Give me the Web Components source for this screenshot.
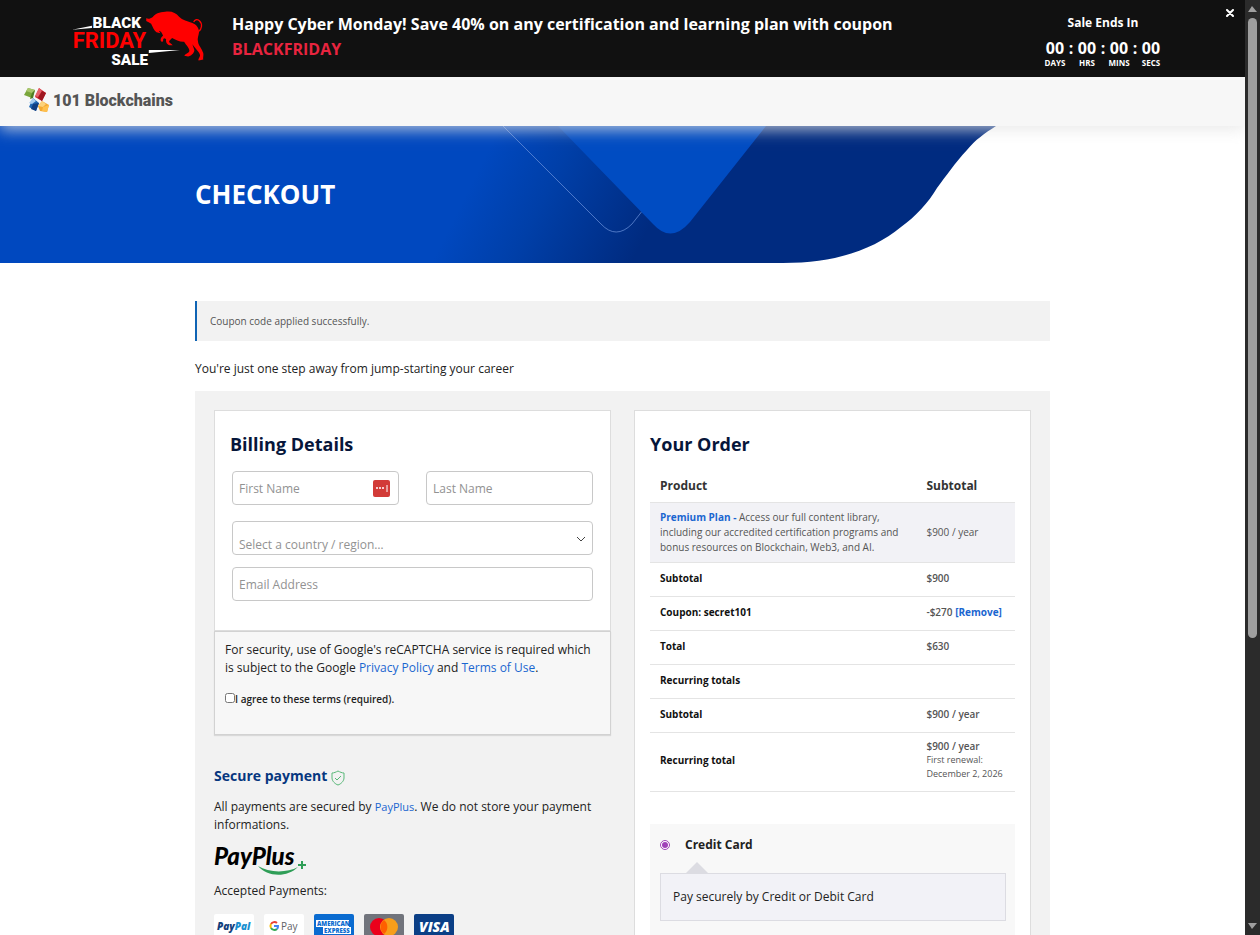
<!DOCTYPE html>
<html lang="en">
<head>
<meta charset="utf-8">
<meta name="viewport" content="width=device-width, initial-scale=1">
<title>Checkout - 101 Blockchains</title>
<style>
    body {
        margin: 0;
        font-family: "Open Sans", "Noto Sans", sans-serif;
        font-size: 12px;
        line-height: 18px;
        color: #222;
        background: #fff;
    }
</style>
</head>
<body>
<checkout-app></checkout-app>

<script>
/** Rules that every component starts from. */
const baseStyles = `
    :host { display: block; box-sizing: border-box; }
    *, *::before, *::after { box-sizing: border-box; }
    h1, h2, h3, p { margin: 0; }
    a { color: #1a66d0; text-decoration: none; }
    svg { display: block; }
`;

/**
 * Base class: attaches a shadow root and renders the markup into it.
 * @extends HTMLElement
 */
class BaseComponent extends HTMLElement {
    constructor() {
        super();
        this.attachShadow({ mode: 'open' });
    }

    connectedCallback() {
        this.shadowRoot.innerHTML = `<style>${baseStyles}${this.styles()}</style>${this.markup()}`;
        this.attachEventListeners();
    }

    styles() { return ''; }
    markup() { return '<slot></slot>'; }
    attachEventListeners() {}
}

/** Countdown to the end of the sale. */
class CountDown extends BaseComponent {
    styles() {
        return `
            :host { padding-top: 4px; text-align: center; font-weight: 700; color: #fff; }
            .title { font-size: 12px; line-height: 18px; margin-bottom: 6px; }
            .units { display: flex; justify-content: center; }
            .unit { width: 24px; font-size: 16px; line-height: 20px; }
            .unit small { display: flex; justify-content: center; font-size: 8px; line-height: 10px; }
            .colon { width: 8px; font-size: 16px; line-height: 20px; }
        `;
    }

    markup() {
        const units = ['DAYS', 'HRS', 'MINS', 'SECS']
            .map(name => `<div class="unit">00<small>${name}</small></div>`)
            .join('<div class="colon">:</div>');
        return `<p class="title">Sale Ends In</p><div class="units">${units}</div>`;
    }
}
customElements.define('count-down', CountDown);

/** Black promo strip on top of the page. */
class PromoBanner extends BaseComponent {
    styles() {
        return `
            :host {
                position: relative;
                z-index: 2;
                display: flex;
                align-items: center;
                gap: 27px;
                height: 77px;
                padding: 0 82px 0 72px;
                background: #111;
                color: #fff;
            }
            .logo { flex: none; }
            .message { flex: 1; padding-bottom: 3px; font-size: 16px; font-weight: 700; line-height: 25px; }
            .code { display: block; color: #e8243f; }
            count-down { flex: none; }
            .close {
                position: absolute;
                top: 6px;
                right: 8px;
                width: 14px;
                height: 14px;
                padding: 3px;
                border: 0;
                background: none;
                color: #fff;
                cursor: pointer;
            }
            text { font-family: Roboto, sans-serif; font-weight: 900; }
        `;
    }

    markup() {
        return `
            <svg class="logo" width="133" height="60" viewBox="20 10 400 180" role="img" aria-label="Black Friday Sale">
                <g fill="#fff">
                    <text x="82" y="67" font-size="46">BLACK</text>
                    <text x="138" y="179" font-size="46">SALE</text>
                </g>
                <text x="22" y="127" font-size="66" fill="#f00" style="font-weight: 700">FRIDAY</text>
                <path fill="#fff" d="M20 72 L80 60 V67ZM251 133 L345 133 L251 142Z"/>
                <path fill="#f00" d="M243 37 C248 41 255 40 263 34 C269 24 283 19 300 18 C319 15 333 21 342 33 C352 43 368 47 382 52 C395 57 402 67 402 80 C401 91 396 98 399 108 C400 119 409 126 413 138 C418 145 413 155 415 162 L401 165 C398 161 405 155 405 149 C404 140 390 129 382 116 L388 133 C388 143 377 151 369 153 L358 150 C360 144 371 143 373 136 C374 128 364 119 357 108 C345 109 331 103 321 97 L313 105 C309 111 319 113 323 119 L313 119 C303 115 302 106 303 100 L297 98 C291 101 298 109 290 108 C283 104 288 93 294 90 C291 83 287 75 281 75 L286 83 L274 80 C267 75 263 64 258 54 L248 48 C240 46 245 42 243 37Z"/>
                <path fill="none" stroke="#f00" stroke-width="4" d="M400 78 C411 71 413 54 403 45 C397 40 389 41 386 49"/>
            </svg>
            <div class="message"><slot></slot><span class="code"><slot name="code"></slot></span></div>
            <count-down></count-down>
            <button class="close" aria-label="Close">
                <svg width="8" height="8" viewBox="0 0 8 8"><path d="M1 1 L7 7 M7 1 L1 7" stroke="currentColor" stroke-width="2" stroke-linecap="round"/></svg>
            </button>
        `;
    }

    attachEventListeners() {
        this.shadowRoot.querySelector('.close').addEventListener('click', () => this.remove());
    }
}
customElements.define('promo-banner', PromoBanner);

/** Site header with the brand logo. */
class SiteHeader extends BaseComponent {
    styles() {
        return `
            :host {
                position: relative;
                z-index: 1;
                display: flex;
                align-items: center;
                height: 49px;
                padding: 0 24px 3px;
                background: #f7f7f7;
                box-shadow: 0 4px 14px rgba(228, 228, 228, 0.75);
            }
            a { display: flex; align-items: center; gap: 4px; color: #555; }
            text { font: 900 16px Roboto, sans-serif; }
        `;
    }

    markup() {
        return `
            <a href="#" aria-label="101 Blockchains">
                <svg width="25" height="26" viewBox="0 0 25 26">
                    <g><path fill="#7aa63c" d="M4 1 L11 3 L8 11 L0 8Z"/><path fill="#a9c66c" d="M4 1 L11 3 L8 6 L2 4Z"/><path fill="#4f7d22" d="M8 6 L11 3 L9 11 L6 12Z"/></g>
                    <g><path fill="#d22630" d="M15 1 L22 6 L18 14 L11 10Z"/><path fill="#e4626a" d="M15 1 L18 4 L14 10 L11 9Z"/><path fill="#9e1720" d="M18 4 L22 6 L18 14 L14 11Z"/></g>
                    <g><path fill="#2068b4" d="M9 11 L15 16 L12 24 L5 20Z"/><path fill="#a8cdf0" d="M9 11 L12 14 L8 17 L5 16Z"/><path fill="#123f82" d="M9 17 L15 16 L12 24 L7 22Z"/></g>
                    <g><path fill="#f3a932" d="M18 14 L25 18 L23 25 L16 24 L14 19Z"/><path fill="#fcd27c" d="M18 14 L22 17 L19 20 L14 19Z"/><path fill="#ffc04d" d="M19 20 L25 18 L23 25 L18 24Z"/></g>
                </svg>
                <svg width="140" height="26" viewBox="0 0 140 26">
                    <text x="0" y="19" fill="currentColor">101 Blockchains</text>
                </svg>
            </a>
        `;
    }
}
customElements.define('site-header', SiteHeader);

/** Blue page title area. The slot takes the title. */
class PageHero extends BaseComponent {
    styles() {
        return `
            :host { display: grid; height: 137px; overflow: hidden; }
            .art, .title { grid-area: 1 / 1; }
            .art { width: 100%; height: 137px; }
            .title {
                align-self: center;
                width: 100%;
                max-width: 855px;
                margin: 0 auto;
                padding-bottom: 2px;
                color: #fff;
                font-size: 26px;
                font-weight: 700;
                line-height: 36px;
            }
        `;
    }

    markup() {
        return `
            <svg class="art" viewBox="0 0 1245 137" preserveAspectRatio="none" aria-hidden="true">
                <defs>
                    <linearGradient id="base" gradientUnits="userSpaceOnUse" x1="480" y1="40" x2="640" y2="120">
                        <stop offset="0" stop-color="#0048bf"/>
                        <stop offset="0.4" stop-color="#003fa8"/>
                        <stop offset="1" stop-color="#002b80"/>
                    </linearGradient>
                </defs>
                <path fill="url(#base)" d="M0 0H996C985 7 975 14 967 24C955 37 946 50 937 62C928 77 916 90 901 101C873 124 835 137 783 137H0Z"/>
                <path fill="none" stroke="#6d94dd" stroke-opacity="0.7" d="M503 0L601 98Q616 114 632 98L643 84"/>
                <path fill="#004cc2" d="M558 0H766L690 96Q671 118 653 98Z"/>
            </svg>
            <h1 class="title"><slot></slot></h1>
        `;
    }
}
customElements.define('page-hero', PageHero);

/** Grey message line with a coloured edge. */
class NoticeBar extends BaseComponent {
    styles() {
        return `
            :host {
                padding: 11px 13px;
                border-left: 2px solid #0f64b4;
                background: #f2f2f2;
                color: #555;
                font-size: 10px;
            }
        `;
    }
}
customElements.define('notice-bar', NoticeBar);

/** White bordered card with a heading attribute. */
class CheckoutCard extends BaseComponent {
    styles() {
        return `
            :host { padding: 15px; border: 1px solid #ddd; background: #fff; }
            h2 { margin-bottom: 7px; color: #06163a; font-size: 18px; font-weight: 700; line-height: 36px; }
        `;
    }

    markup() {
        return `<h2>${this.getAttribute('heading')}</h2><slot></slot>`;
    }
}
customElements.define('checkout-card', CheckoutCard);

/** Single text input; "vault" adds the password manager button. */
class TextField extends BaseComponent {
    styles() {
        return `
            :host { position: relative; }
            input {
                display: block;
                width: 100%;
                height: 34px;
                padding: 0 6px;
                border: 1px solid #c8c8c8;
                border-radius: 4px;
                background: #fff;
                color: #333;
                font: inherit;
            }
            input::placeholder { color: #929292; opacity: 1; }
            .vault {
                position: absolute;
                top: 9px;
                right: 9px;
                padding: 0;
                border: 0;
                background: none;
            }
        `;
    }

    markup() {
        const label = this.getAttribute('label');
        const vault = this.hasAttribute('vault') ? `
            <button class="vault" type="button" aria-label="Fill in">
                <svg width="17" height="17" viewBox="0 0 17 17">
                    <rect width="17" height="17" rx="2" fill="#d23b38"/>
                    <circle cx="4" cy="8" r="1" fill="#fff"/><circle cx="7" cy="8" r="1" fill="#fff"/><circle cx="10" cy="8" r="1" fill="#fff"/>
                    <path d="M14 5V12" stroke="#fff"/>
                </svg>
            </button>` : '';
        return `<input type="${this.getAttribute('type') || 'text'}" placeholder="${label}" aria-label="${label}">${vault}`;
    }
}
customElements.define('text-field', TextField);

/** Country drop-down. */
class CountrySelect extends BaseComponent {
    styles() {
        return `
            :host { position: relative; }
            select {
                display: block;
                width: 100%;
                height: 34px;
                padding: 14px 28px 0 6px;
                border: 1px solid #c8c8c8;
                border-radius: 4px;
                appearance: none;
                background: #fff;
                color: #929292;
                font: inherit;
            }
            svg { position: absolute; top: 14px; right: 7px; pointer-events: none; }
        `;
    }

    markup() {
        return `
            <select aria-label="Country / Region"><option>Select a country / region…</option></select>
            <svg width="10" height="8" viewBox="0 0 10 8"><path d="M1 2L5 6L9 2" fill="none" stroke="#444"/></svg>
        `;
    }
}
customElements.define('country-select', CountrySelect);

/** Name, country and email fields. */
class BillingForm extends BaseComponent {
    styles() {
        return `
            form { display: grid; grid-template-columns: 1fr 1fr; column-gap: 27px; padding: 2px 2px 14px; }
            .wide { grid-column: 1 / -1; }
            country-select { margin: 16px 0 12px; }
        `;
    }

    markup() {
        return `
            <form>
                <text-field label="First Name" vault></text-field>
                <text-field label="Last Name"></text-field>
                <country-select class="wide"></country-select>
                <text-field class="wide" type="email" label="Email Address"></text-field>
            </form>
        `;
    }
}
customElements.define('billing-form', BillingForm);

/** reCAPTCHA terms with the consent tick box. */
class TermsBox extends BaseComponent {
    styles() {
        return `
            :host {
                padding: 9px 10px 26px;
                border: 1px solid #d2d2d2;
                background: #f7f7f7;
                box-shadow: 0 1px 1px rgba(0, 0, 0, 0.1);
            }
            label { display: flex; align-items: center; margin-top: 13px; font-size: 10px; font-weight: 600; line-height: 18px; }
            input { width: 10px; height: 10px; margin: 0 0 3px; }
        `;
    }

    markup() {
        return `
            <p>For security, use of Google's reCAPTCHA service is required which is subject to the Google
            <a href="#">Privacy Policy</a> and <a href="#">Terms of Use</a>.</p>
            <label><input type="checkbox">I agree to these terms (required).</label>
        `;
    }
}
customElements.define('terms-box', TermsBox);

/** Payment brand marks, keyed by the badge's brand attribute. */
const brandMarks = {
    paypal: `
        <rect width="40" height="26" rx="2" fill="#fff"/>
        <text x="3" y="16" font-size="10" font-style="italic" font-weight="800" fill="#123f7c">Pay<tspan fill="#1a8fd0">Pal</tspan></text>`,
    gpay: `
        <rect width="40" height="26" rx="2" fill="#fff"/>
        <g fill="none" stroke-width="2">
            <path stroke="#ea4335" d="M7 10A4 4 0 0 1 13 9"/>
            <path stroke="#fbbc04" d="M7 10A4 4 0 0 0 7 14"/>
            <path stroke="#34a853" d="M7 14A4 4 0 0 0 13 15"/>
            <path stroke="#4285f4" d="M13 15A4 4 0 0 0 14 12H10"/>
        </g>
        <text x="17" y="16" font-size="10" fill="#5f6368">Pay</text>`,
    amex: `
        <rect width="40" height="26" rx="2" fill="#0a6bd0"/>
        <rect x="2" y="6" width="33" height="7" fill="#fff"/>
        <rect x="9" y="13" width="28" height="7" fill="#fff"/>
        <text x="3" y="12" font-size="6" font-weight="800" fill="#0a6bd0">AMERICAN</text>
        <text x="10" y="19" font-size="6" font-weight="800" fill="#0a6bd0">EXPRESS</text>`,
    mastercard: `
        <rect width="40" height="26" rx="2" fill="#71747c"/>
        <circle cx="15" cy="13" r="9" fill="#eb001b"/>
        <circle cx="25" cy="13" r="9" fill="#f79e1b"/>
        <path fill="#ff5f00" d="M20 6A9 9 0 0 1 20 20A9 9 0 0 1 20 6Z"/>`,
    visa: `
        <rect width="40" height="26" rx="2" fill="#0b3f86"/>
        <text x="5" y="18" font-size="14" font-style="italic" font-weight="800" fill="#fff">VISA</text>`
};

/** One accepted payment brand. */
class PaymentBadge extends BaseComponent {
    styles() {
        return 'text { font-family: "Open Sans", sans-serif; }';
    }

    markup() {
        return `<svg width="40" height="26" viewBox="0 0 40 26">${brandMarks[this.getAttribute('brand')]}</svg>`;
    }
}
customElements.define('payment-badge', PaymentBadge);

/** Secure payment note with the accepted brands. */
class SecurePayment extends BaseComponent {
    styles() {
        return `
            h3 { display: flex; align-items: center; gap: 4px; margin-bottom: 12px; color: #07377f; font-size: 14px; font-weight: 700; line-height: 20px; }
            h3 svg { margin-top: 4px; }
            p a { font-size: 11px; }
            .logo { margin: 10px 0 6px; overflow: visible; }
            .logo text { font: italic 900 24px Lato, sans-serif; }
            .badges { display: flex; gap: 10px; margin-top: 14px; }
        `;
    }

    markup() {
        const badges = Object.keys(brandMarks).map(brand => `<payment-badge brand="${brand}"></payment-badge>`).join('');
        return `
            <h3>Secure payment
                <svg width="14" height="16" viewBox="0 0 14 16" fill="none" stroke="#58b878">
                    <path d="M7 1C5 2 3 3 1 3V8C1 11 4 14 7 15C10 14 13 11 13 8V3C11 3 9 2 7 1Z"/>
                    <path d="M4 8L6 10L10 6"/>
                </svg>
            </h3>
            <p>All payments are secured by <a href="#">PayPlus</a>. We do not store your payment informations.</p>
            <svg class="logo" width="92" height="32" viewBox="0 0 92 32" role="img" aria-label="PayPlus">
                <text x="0" y="21" fill="#000">PayPlus</text>
                <path fill="#2f9e57" d="M44 22C55 29 73 29 84 23C73 34 53 33 44 22Z"/>
                <path fill="none" stroke="#2f9e57" stroke-width="2" d="M84 21H92M88 17V25"/>
            </svg>
            <p>Accepted Payments:</p>
            <div class="badges">${badges}</div>
        `;
    }
}
customElements.define('secure-payment', SecurePayment);

/** Order table. */
class OrderSummary extends BaseComponent {
    styles() {
        return `
            table { width: 100%; border-collapse: collapse; table-layout: fixed; font-size: 10px; line-height: 14px; }
            th, td { padding: 8px 10px 11px; border-bottom: 1px solid #e4e4e4; text-align: left; vertical-align: middle; }
            th { color: #111; font-weight: 700; }
            td { color: #555; font-weight: 600; }
            th:first-child { width: 73%; }
            thead th { height: 33px; color: #333; font-size: 12px; line-height: 18px; padding: 8px 10px 6px; }
            .product td { padding: 7px 10px; background: #f2f2f6; font-weight: 400; line-height: 15px; }
            td a { font-weight: 700; }
            .recurring th, .recurring td { padding: 6px 10px 10px; }
            small { display: block; font-size: 9px; font-weight: 400; }
        `;
    }

    markup() {
        const row = (name, value) => `<tr><th scope="row">${name}</th><td>${value}</td></tr>`;
        return `
            <table>
                <thead><tr><th scope="col">Product</th><th scope="col">Subtotal</th></tr></thead>
                <tbody>
                    <tr class="product">
                        <td><a href="#">Premium Plan -</a> Access our full content library, including our accredited certification programs and bonus resources on Blockchain, Web3, and AI.</td>
                        <td>$900 / year</td>
                    </tr>
                    ${row('Subtotal', '$900')}
                    ${row('Coupon: secret101', '-$270 <a href="#">[Remove]</a>')}
                    ${row('Total', '$630')}
                    ${row('Recurring totals', '')}
                    ${row('Subtotal', '$900 / year')}
                    <tr class="recurring"><th scope="row">Recurring total</th><td>$900 / year<small>First renewal: December 2, 2026</small></td></tr>
                </tbody>
            </table>
        `;
    }
}
customElements.define('order-summary', OrderSummary);

/** Payment method chooser. */
class PaymentMethod extends BaseComponent {
    styles() {
        return `
            :host { margin-top: 32px; padding: 12px 9px 160px 10px; background: #f8f8f8; }
            label { display: flex; align-items: center; gap: 15px; font-weight: 700; }
            input { width: 10px; height: 10px; margin: 0; accent-color: #a040b8; }
            .details {
                position: relative;
                margin-top: 19px;
                padding: 14px 12px;
                border: 1px solid #dcdce2;
                background: #f2f2f7;
            }
            .details::before {
                content: "";
                position: absolute;
                bottom: 100%;
                left: 24px;
                border: 12px solid transparent;
                border-top: 0;
                border-bottom-color: #dcdce2;
            }
        `;
    }

    markup() {
        return `
            <label><input type="radio" name="method" checked>Credit Card</label>
            <p class="details">Pay securely by Credit or Debit Card</p>
        `;
    }
}
customElements.define('payment-method', PaymentMethod);

/** Dark scroll rail at the window's edge. */
class ScrollRail extends BaseComponent {
    styles() {
        return `
            :host {
                display: flex;
                flex-direction: column;
                align-items: center;
                width: 15px;
                padding: 5px 0;
                background: #2b2b2b;
            }
            .track { flex: 1; width: 9px; padding: 5px 0; }
            .thumb { height: 69%; border-radius: 5px; background: #9f9f9f; }
        `;
    }

    markup() {
        return `
            <svg width="9" height="8" viewBox="0 0 9 8"><path d="M4 1L9 7H0Z" fill="#9f9f9f"/></svg>
            <div class="track"><div class="thumb"></div></div>
            <svg width="9" height="8" viewBox="0 0 9 8"><path d="M0 1H9L4 7Z" fill="#9f9f9f"/></svg>
        `;
    }
}
customElements.define('scroll-rail', ScrollRail);

/** The checkout page. */
class CheckoutApp extends BaseComponent {
    styles() {
        return `
            :host { display: flex; height: 100vh; }
            .page { flex: 1; min-width: 0; overflow-y: auto; scrollbar-width: none; }
            main { width: 100%; max-width: 855px; margin: 38px auto 0; }
            .intro { margin: 19px 0 13px; }
            .columns {
                display: grid;
                grid-template-columns: 1fr 1fr;
                gap: 23px;
                padding: 19px;
                background: #f2f2f2;
            }
            secure-payment { margin-top: 31px; }
        `;
    }

    markup() {
        return `
            <div class="page">
                <promo-banner>Happy Cyber Monday! Save 40% on any certification and learning plan with coupon<span slot="code">BLACKFRIDAY</span></promo-banner>
                <site-header></site-header>
                <page-hero>CHECKOUT</page-hero>
                <main>
                    <notice-bar>Coupon code applied successfully.</notice-bar>
                    <p class="intro">You're just one step away from jump-starting your career</p>
                    <div class="columns">
                        <div>
                            <checkout-card heading="Billing Details"><billing-form></billing-form></checkout-card>
                            <terms-box></terms-box>
                            <secure-payment></secure-payment>
                        </div>
                        <checkout-card heading="Your Order">
                            <order-summary></order-summary>
                            <payment-method></payment-method>
                        </checkout-card>
                    </div>
                </main>
            </div>
            <scroll-rail></scroll-rail>
        `;
    }
}
customElements.define('checkout-app', CheckoutApp);
</script>
</body>
</html>
